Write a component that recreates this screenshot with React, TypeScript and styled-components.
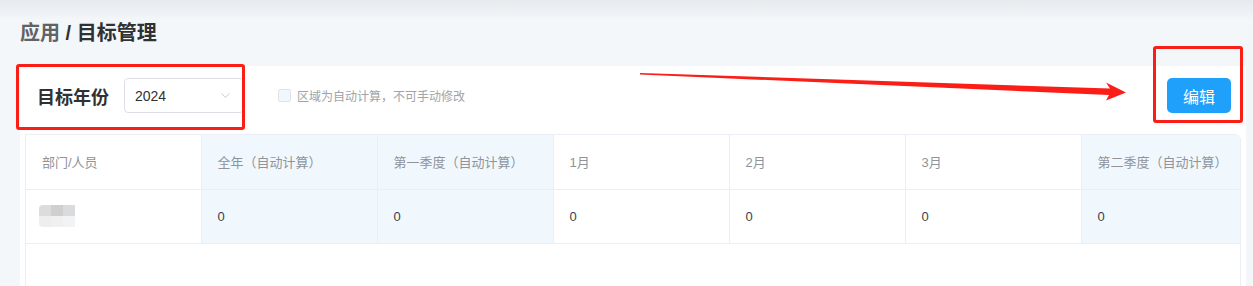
import React from "react";
import styled, { createGlobalStyle } from "styled-components";
import { ChevronDown } from "lucide-react";

const GlobalStyle = createGlobalStyle`
  html, body {
    margin: 0;
    padding: 0;
  }
  body {
    background: linear-gradient(#e6eaee 0, #f3f7fa 20px, #f3f7fa 100%);
    font-family: "Liberation Sans", "Noto Sans CJK SC", sans-serif;
    color: #333;
  }
`;

const Page = styled.div`
  position: relative;
  height: 286px;
  overflow: hidden;
  padding: 19px 7px 0 20px;
  box-sizing: border-box;
`;

const Breadcrumb = styled.div`
  font-size: 20px;
  font-weight: 700;
  line-height: 28px;
  margin-bottom: 19px;
  color: #303133;

  .crumb__parent {
    color: #606266;
  }
`;

const Card = styled.div`
  background: #fff;
  padding: 0 5px;
  min-height: 260px;
`;

const Toolbar = styled.div`
  display: flex;
  align-items: center;
  padding: 12px 10px 21px 12px;
`;

const Label = styled.span`
  font-size: 18px;
  font-weight: 700;
  color: #303133;
  margin-right: 15px;
`;

const Select = styled.div`
  display: flex;
  align-items: center;
  justify-content: space-between;
  width: 120px;
  height: 35px;
  box-sizing: border-box;
  border: 1px solid #dcdfe6;
  border-radius: 4px;
  padding: 0 10px;
  font-size: 14px;
  color: #303133;
`;

const Hint = styled.label`
  display: flex;
  align-items: center;
  gap: 6px;
  margin-left: 34px;
  font-size: 12px;
  color: #a0a3a8;
`;

const Swatch = styled.span`
  width: 13px;
  height: 13px;
  box-sizing: border-box;
  border: 1px solid #dfe4ea;
  border-radius: 2px;
  background: #f0f8fe;
`;

const EditButton = styled.button`
  margin-left: auto;
  width: 64px;
  height: 35px;
  border: none;
  border-radius: 5px;
  background: #1fa0fb;
  color: #fff;
  font-family: inherit;
  font-size: 16px;
`;

const TableWrap = styled.div`
  border: 1px solid #ebeef5;
  border-bottom: none;
  border-radius: 0 6px 0 0;
  overflow: hidden;
  height: 200px;
`;

const Table = styled.table<{ $cols: number }>`
  border-collapse: collapse;
  table-layout: fixed;
  width: ${(p) => p.$cols * 176 - 1}px;
`;

const Cell = styled.td<{ $auto?: boolean; $head?: boolean }>`
  width: 176px;
  height: 54px;
  box-sizing: border-box;
  padding: 0 16px;
  border-right: 1px solid #ebeef5;
  border-bottom: 1px solid #ebeef5;
  background: ${(p) => (p.$auto ? "#f0f8fe" : "#fff")};
  color: ${(p) => (p.$head ? "#909399" : "#404246")};
  font-size: 13px;
  font-weight: 400;
  text-align: left;
  white-space: nowrap;
  overflow: hidden;

  &:first-child {
    width: 175px;
    padding-left: 13px;
  }
`;

const Blurred = styled.div`
  display: grid;
  grid-template-columns: repeat(3, 12px);
  grid-template-rows: repeat(2, 11px);
  border-radius: 4px;
  overflow: hidden;
  filter: blur(0.6px);

  span:nth-child(1) { background: #dcdcdc; }
  span:nth-child(2) { background: #cfcfcf; }
  span:nth-child(3) { background: #dadbdd; }
  span:nth-child(4) { background: #eeeeee; }
  span:nth-child(5) { background: #f0f0f0; }
  span:nth-child(6) { background: #f3f3f4; }
`;

const HeadText = styled.span`
  padding-left: 3px;
`;

const Mark = styled.div<{ $x: number; $y: number; $w: number; $h: number }>`
  position: absolute;
  left: ${(p) => p.$x}px;
  top: ${(p) => p.$y}px;
  width: ${(p) => p.$w}px;
  height: ${(p) => p.$h}px;
  box-sizing: border-box;
  border: 3px solid #fb1e17;
  border-radius: 3px;
  pointer-events: none;
`;

const Arrow = styled.svg`
  position: absolute;
  left: 630px;
  top: 65px;
`;

const columns = [
  { title: "部门/人员" },
  { title: "全年（自动计算）", auto: true },
  { title: "第一季度（自动计算）", auto: true },
  { title: "1月" },
  { title: "2月" },
  { title: "3月" },
  { title: "第二季度（自动计算）", auto: true },
];

const App: React.FC = () => {
  return (
    <>
      <GlobalStyle />
      <Page>
        <Breadcrumb>
          <span className="crumb__parent">应用</span> / 目标管理
        </Breadcrumb>
        <Card>
          <Toolbar>
            <Label>目标年份</Label>
            <Select>
              <span>2024</span>
              <ChevronDown size={15} color="#c0c4cc" strokeWidth={1.4} />
            </Select>
            <Hint>
              <Swatch />
              区域为自动计算，不可手动修改
            </Hint>
            <EditButton>编辑</EditButton>
          </Toolbar>
          <TableWrap>
            <Table $cols={columns.length}>
              <thead>
                <tr>
                  {columns.map((c, i) => (
                    <Cell as="th" key={c.title} $auto={c.auto} $head>
                      {i === 0 ? <HeadText>{c.title}</HeadText> : c.title}
                    </Cell>
                  ))}
                </tr>
              </thead>
              <tbody>
                <tr>
                  {columns.map((c, i) => (
                    <Cell key={c.title} $auto={c.auto}>
                      {i === 0 ? (
                        <Blurred>
                          {Array.from({ length: 6 }).map((_, k) => (
                            <span key={k} />
                          ))}
                        </Blurred>
                      ) : (
                        "0"
                      )}
                    </Cell>
                  ))}
                </tr>
              </tbody>
            </Table>
          </TableWrap>
        </Card>

        <Mark $x={16} $y={64} $w={229} $h={66} />
        <Mark $x={1153} $y={46} $w={90} $h={77} />
        <Arrow width="510" height="40" viewBox="0 0 510 40">
          <polygon
            points="10,8 480,23.5 476,17.5 496,27.5 476,35.5 479,30 10,9.5"
            fill="#fb1e17"
          />
        </Arrow>
      </Page>
    </>
  );
};

export default App;
